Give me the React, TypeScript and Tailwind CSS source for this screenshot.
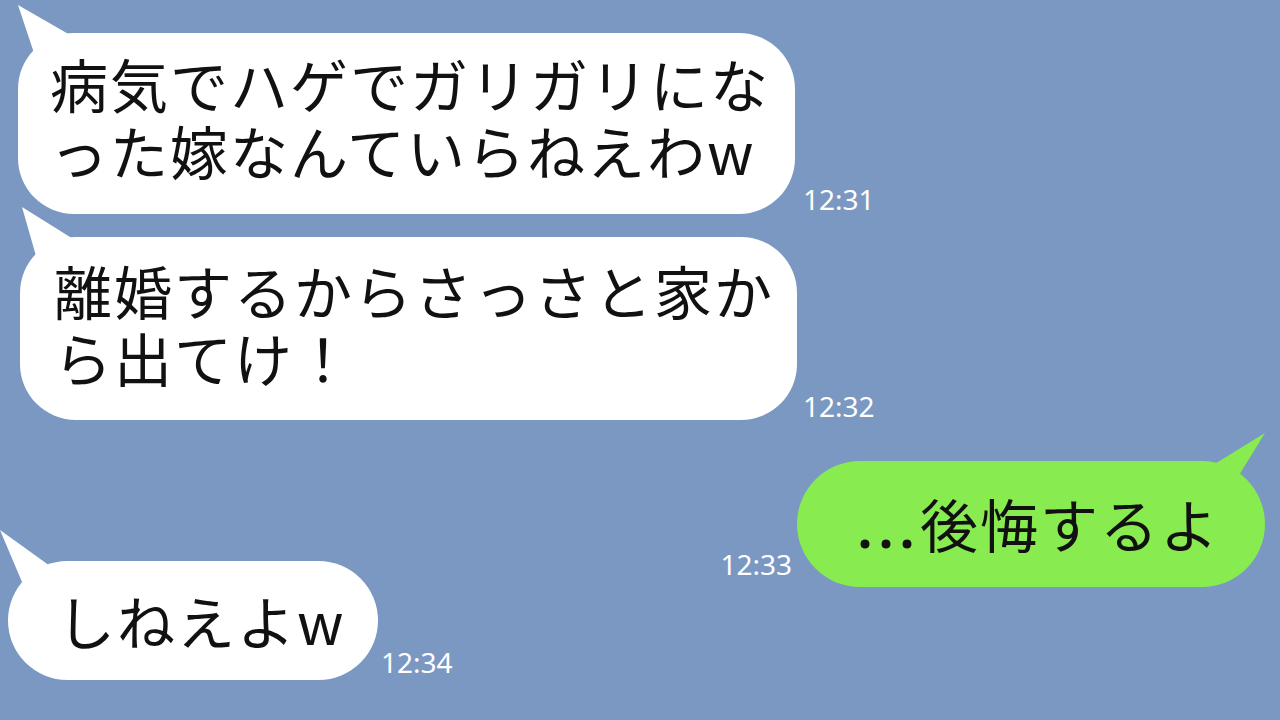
export default function App() {
  return (
    <main className="relative h-[720px] w-[1280px] overflow-hidden bg-[#7b98c2] font-['Noto_Sans_CJK_JP','Noto_Sans',sans-serif] text-[#111]">
      {/* message 1 */}
      <div className="flex items-end pl-[18px] pt-[33px]">
        <div className="relative h-[181px] w-[777px] rounded-[56px] bg-white pl-[32px] pt-[17px] text-[58px] leading-[67px] tracking-[2px]">
          <svg className="absolute left-0 top-[-30px]" width="70" height="60" viewBox="0 0 70 60">
            <polygon points="0,2 18,56 66,40" fill="#fff" />
          </svg>
          <div className="relative">病気でハゲでガリガリにな</div>
          <div className="relative">った嫁なんていらねえわw</div>
        </div>
        <span className="mb-[1px] ml-[8px] font-['Noto_Sans',sans-serif] text-[28px] leading-none text-white">12:31</span>
      </div>

      {/* message 2 */}
      <div className="flex items-end pl-[20px] pt-[23px]">
        <div className="relative h-[183px] w-[777px] rounded-[56px] bg-white pl-[34px] pt-[20px] text-[58px] leading-[67px] tracking-[2px]">
          <svg className="absolute left-0 top-[-30px]" width="70" height="60" viewBox="0 0 70 60">
            <polygon points="2,0 18,56 66,40" fill="#fff" />
          </svg>
          <div className="relative">離婚するからさっさと家か</div>
          <div className="relative">ら出てけ！</div>
        </div>
        <span className="ml-[6px] font-['Noto_Sans',sans-serif] text-[28px] leading-none text-white">12:32</span>
      </div>

      {/* message 3 (mine) */}
      <div className="flex items-end justify-end pr-[15px] pt-[41px]">
        <span className="mb-[9px] mr-[5px] font-['Noto_Sans',sans-serif] text-[28px] leading-none text-white">12:33</span>
        <div className="relative flex h-[126px] w-[468px] items-center rounded-[63px] bg-[#88ec50] pl-[60px] text-[58px] leading-[67px] tracking-[2px]">
          <svg className="absolute right-[-2px] top-[-30px]" width="60" height="60" viewBox="0 0 60 60">
            <polygon points="58,2 6,34 26,54" fill="#88ec50" />
          </svg>
          <span className="relative">
            <span className="font-['Noto_Sans',sans-serif] font-semibold tracking-[5px]">...</span>
            後悔するよ
          </span>
        </div>
      </div>

      {/* message 4 */}
      <div className="mt-[-26px] flex items-end pl-[8px]">
        <div className="relative flex h-[119px] w-[370px] items-center rounded-[60px] bg-white pl-[49px] text-[58px] leading-[67px] tracking-[2px]">
          <svg className="absolute left-[-8px] top-[-31px]" width="60" height="60" viewBox="0 0 60 60">
            <polygon points="0,0 22,52 50,36" fill="#fff" />
          </svg>
          <span className="relative">しねえよw</span>
        </div>
        <span className="mb-[4px] ml-[3px] font-['Noto_Sans',sans-serif] text-[28px] leading-none text-white">12:34</span>
      </div>
    </main>
  );
}
